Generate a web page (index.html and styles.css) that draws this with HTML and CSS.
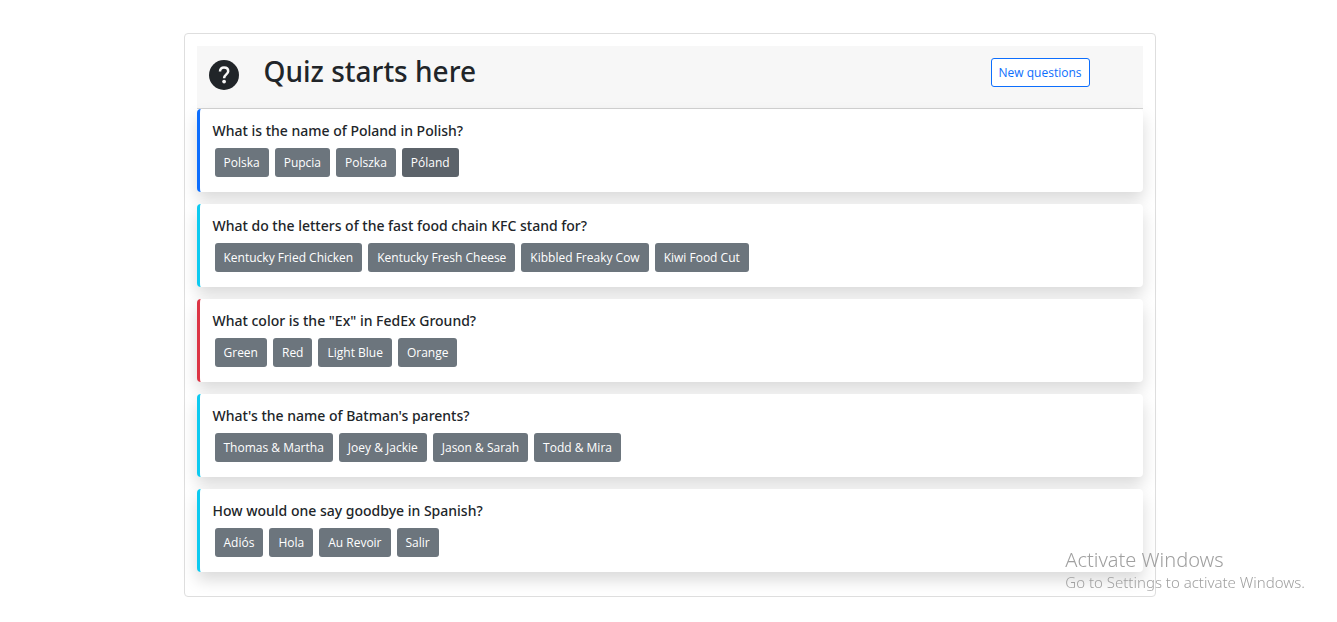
FILE: index.html
```html
<!DOCTYPE html>
<html lang="en">
<head>
<meta charset="utf-8">
<meta name="viewport" content="width=device-width, initial-scale=1">
<title>Quiz</title>
<link rel="stylesheet" href="styles.css">
</head>
<body>
<main class="quiz">
  <header class="quiz-header">
    <svg class="quiz-icon" viewBox="0 0 30 30" aria-hidden="true"><circle cx="15" cy="15" r="15" fill="#212529"/><path d="M11 11.500C11 8.700 12.700 7.600 15 7.600s4.200 1.300 4.200 3.700c0 3.100-4.100 3.200-4.100 6.900" fill="none" stroke="#f7f7f7" stroke-width="2.500"/><circle cx="15.100" cy="21.600" r="1.900" fill="#f7f7f7"/></svg>
    <h1 class="quiz-title">Quiz starts here</h1>
    <button class="new-button" type="button">New questions</button>
  </header>
  <section class="question question-primary">
    <h2 class="question-title">What is the name of Poland in Polish?</h2>
    <div class="answers"><button class="answer" type="button">Polska</button><button class="answer" type="button">Pupcia</button><button class="answer" type="button">Polszka</button><button class="answer answer-active" type="button">Póland</button></div>
  </section>
  <section class="question question-info">
    <h2 class="question-title">What do the letters of the fast food chain KFC stand for?</h2>
    <div class="answers"><button class="answer" type="button">Kentucky Fried Chicken</button><button class="answer" type="button">Kentucky Fresh Cheese</button><button class="answer" type="button">Kibbled Freaky Cow</button><button class="answer" type="button">Kiwi Food Cut</button></div>
  </section>
  <section class="question question-danger">
    <h2 class="question-title">What color is the "Ex" in FedEx Ground?</h2>
    <div class="answers"><button class="answer" type="button">Green</button><button class="answer" type="button">Red</button><button class="answer" type="button">Light Blue</button><button class="answer" type="button">Orange</button></div>
  </section>
  <section class="question question-info">
    <h2 class="question-title">What's the name of Batman's parents?</h2>
    <div class="answers"><button class="answer" type="button">Thomas &amp; Martha</button><button class="answer" type="button">Joey &amp; Jackie</button><button class="answer" type="button">Jason &amp; Sarah</button><button class="answer" type="button">Todd &amp; Mira</button></div>
  </section>
  <section class="question question-info">
    <h2 class="question-title">How would one say goodbye in Spanish?</h2>
    <div class="answers"><button class="answer" type="button">Adiós</button><button class="answer" type="button">Hola</button><button class="answer" type="button">Au Revoir</button><button class="answer" type="button">Salir</button></div>
  </section>
</main>
<aside class="watermark">
  <p class="watermark-title">Activate Windows</p>
  <p class="watermark-text">Go to Settings to activate Windows.</p>
</aside>
</body>
</html>
```
FILE: styles.css
```css
* { box-sizing: border-box; }
body {
  margin: 0;
  padding-left: 2px;
  background: #fff;
  color: #212529;
  font-family: "Segoe UI", "Noto Sans", "Open Sans", sans-serif;
}
h1, h2, p { margin: 0; }
button { font-family: "Segoe UI", "Open Sans", sans-serif; cursor: pointer; }
.quiz {
  width: 73%;
  min-width: 320px;
  max-width: 972px;
  margin: 33px auto 25px;
  padding: 12px;
  border: 1px solid #dedede;
  border-radius: 4px;
}
.quiz-header {
  display: flex;
  align-items: flex-start;
  padding: 12px 53px 18px 12px;
  background: #f7f7f7;
  border-bottom: 1px solid #d3d3d3;
}
.quiz-icon { width: 30px; height: 30px; margin-top: 2px; }
.quiz-title {
  flex: 1;
  margin-left: 25px;
  font-size: 28px;
  font-weight: 500;
  line-height: 27px;
}
.new-button {
  height: 29px;
  padding: 0 7px;
  border: 1px solid #0d6efd;
  border-radius: 3px;
  background: #fff;
  color: #0d6efd;
  font-size: 12px;
}
.question {
  margin-bottom: 12px;
  padding: 12px 12px 15px 13px;
  border-left: 3px solid;
  border-radius: 4px;
  background: #fff;
  box-shadow: 0 8px 16px rgba(0, 0, 0, 0.15);
}
.question-primary { border-left-color: #0d6efd; }
.question-info { border-left-color: #0dcaf0; }
.question-danger { border-left-color: #dc3545; }
.question-title {
  margin-bottom: 8px;
  font-size: 14px;
  font-weight: 500;
  line-height: 19px;
}
.answers { display: flex; flex-wrap: wrap; gap: 6px; padding-left: 2px; }
.answer {
  height: 29px;
  padding: 0 9px;
  border: 0;
  border-radius: 3px;
  background: #6c757d;
  color: #fff;
  font-size: 12px;
}
.answer-active { background: #5c636a; }
.watermark {
  position: fixed;
  right: 32px;
  bottom: 30px;
  color: #a0a0a0;
  font-weight: 300;
}
.watermark-title { font-size: 20px; line-height: 24px; }
.watermark-text { font-size: 15px; line-height: 20px; }
```
